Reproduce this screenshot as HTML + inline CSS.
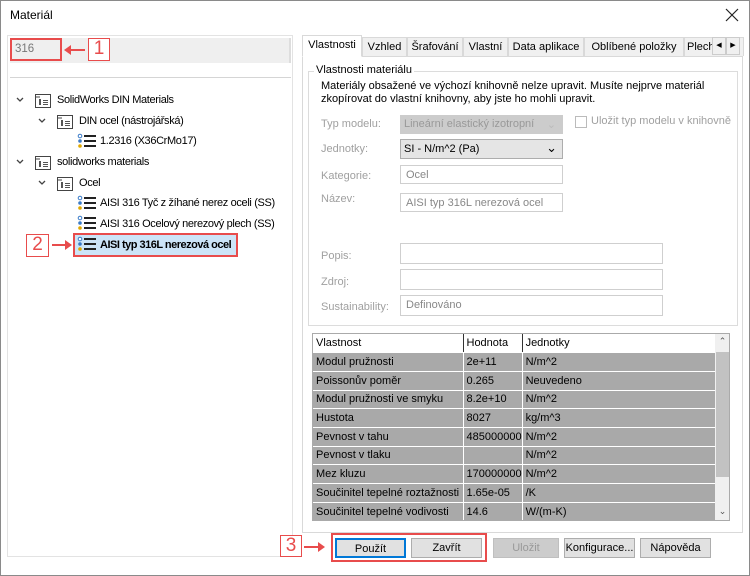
<!DOCTYPE html>
<html><head><meta charset="utf-8"><style>
*{box-sizing:border-box;margin:0;padding:0}
body{width:750px;height:576px;background:#fff;font-family:"Liberation Sans","DejaVu Sans",sans-serif;font-size:11.5px;color:#000;position:relative;overflow:hidden}
.a{position:absolute}
.frame{left:0;top:0;width:750px;height:576px;border:1px solid #8a8a8a}
.redbox{border:2px solid #e84c4c}
.num{border:1px solid #e84c4c;color:#e84c4c;font-size:19px;text-align:center;line-height:20px;background:#fff}
.arrow{height:2px;background:#e84c4c}
.lbl{color:#a0a0a0;font-size:11px}
.inp{border:1px solid #cfcfcf;background:#fff;color:#888;font-size:11px;padding:3px 0 0 5px}
.tab{top:37px;height:19px;border:1px solid #d9d9d9;border-bottom:none;background:#f0f0f0;font-size:11px;padding-top:3px;text-align:center}
.btn{top:538px;height:20px;border:1px solid #adadad;background:#e1e1e1;font-size:11px;text-align:center;line-height:18px}
table{border-collapse:collapse;font-size:11px}
td{height:18.7px;border-right:1px solid #fff;border-bottom:1px solid #fff;padding-left:3px;background:#a9a9a9;white-space:nowrap}
.tr{font-size:11px;letter-spacing:-0.35px}
</style></head><body>
<div class="a frame"></div>
<div class="a" style="left:10px;top:8px;font-size:12px">Materiál</div>
<svg class="a" style="left:725px;top:8px" width="14" height="14"><path d="M1 1L13 13M13 1L1 13" stroke="#222" stroke-width="1.2"/></svg>

<!-- left panel -->
<div class="a" style="left:7px;top:35px;width:286px;height:522px;border:1px solid #e3e3e3"></div>
<div class="a" style="left:10px;top:38px;width:281px;height:25px;background:#efefef;border-right:2px solid #ddd"></div>
<div class="a redbox" style="left:10px;top:38px;width:52px;height:23px"></div>
<div class="a" style="left:15px;top:43px;color:#777;font-size:11.5px">316</div>
<div class="a arrow" style="left:67px;top:49px;width:18px"></div>
<div class="a" style="left:64px;top:45px;width:0;height:0;border:5px solid transparent;border-right:7px solid #e84c4c;border-left:none"></div>
<div class="a num" style="left:88px;top:38px;width:22px;height:23px">1</div>
<div class="a" style="left:10px;top:77px;width:281px;height:1px;background:#d5d5d5"></div>

<svg class="a" style="left:0;top:0" width="300" height="260">
 <g fill="none" stroke="#444" stroke-width="1.3">
  <path d="M17 98l3 3 3-3"/><path d="M39 119l3 3 3-3"/><path d="M17 160l3 3 3-3"/><path d="M39 181l3 3 3-3"/>
 </g>
 <g fill="#fff" stroke="#444">
  <rect x="35.5" y="94.5" width="15" height="13"/><rect x="57.5" y="115.5" width="15" height="13"/>
  <rect x="35.5" y="156.5" width="15" height="13"/><rect x="57.5" y="177.5" width="15" height="13"/>
 </g>
 <g stroke="#444"><path d="M35 97h5M57 118h5M35 159h5M57 180h5"/></g>
 <g stroke="#222" stroke-width="2">
  <path d="M84 136h12M84 141h12M84 146h12"/>
  <path d="M84 198h12M84 203h12M84 208h12"/>
  <path d="M84 218h12M84 223h12M84 228h12"/>
  <path d="M84 239h12M84 244h12M84 249h12"/>
 </g>
 <g fill="#fff" stroke="#3a7bc8"><circle cx="80" cy="136" r="1.8"/><circle cx="80" cy="198" r="1.8"/><circle cx="80" cy="218" r="1.8"/><circle cx="80" cy="239" r="1.8"/></g>
 <g fill="#3a7bc8"><circle cx="80" cy="141" r="1.8"/><circle cx="80" cy="203" r="1.8"/><circle cx="80" cy="223" r="1.8"/><circle cx="80" cy="244" r="1.8"/></g>
 <g fill="#e0a800"><circle cx="80" cy="146" r="1.8"/><circle cx="80" cy="208" r="1.8"/><circle cx="80" cy="228" r="1.8"/><circle cx="80" cy="249" r="1.8"/></g>
 <g fill="#555"><rect x="39" y="99" width="2" height="6"/><rect x="61" y="120" width="2" height="6"/><rect x="39" y="161" width="2" height="6"/><rect x="61" y="182" width="2" height="6"/>
 <path d="M43 100h5v1h-5zM43 102h5v1h-5zM43 104h5v1h-5zM65 121h5v1h-5zM65 123h5v1h-5zM65 125h5v1h-5zM43 162h5v1h-5zM43 164h5v1h-5zM43 166h5v1h-5zM65 183h5v1h-5zM65 185h5v1h-5zM65 187h5v1h-5z"/></g>
</svg>
<div class="a tr" style="left:57px;top:94px">SolidWorks DIN Materials</div>
<div class="a tr" style="left:79px;top:115px">DIN ocel (nástrojářská)</div>
<div class="a tr" style="left:100px;top:135px">1.2316 (X36CrMo17)</div>
<div class="a tr" style="left:57px;top:156px">solidworks materials</div>
<div class="a tr" style="left:79px;top:177px">Ocel</div>
<div class="a tr" style="left:100px;top:197px">AISI 316 Tyč z žíhané nerez oceli (SS)</div>
<div class="a tr" style="left:100px;top:218px">AISI 316 Ocelový nerezový plech (SS)</div>
<div class="a redbox" style="left:73px;top:233px;width:165px;height:24px;background:#cce4f7;z-index:-1"></div>
<div class="a tr" style="left:100px;top:239px;font-weight:bold;letter-spacing:-0.5px">AISI typ 316L nerezová ocel</div>
<div class="a num" style="left:26px;top:234px;width:23px;height:23px">2</div>
<div class="a arrow" style="left:52px;top:244px;width:15px"></div>
<div class="a" style="left:65px;top:240px;width:0;height:0;border:5px solid transparent;border-left:7px solid #e84c4c;border-right:none"></div>

<!-- tabs -->
<div class="a" style="left:302px;top:56px;width:441px;height:477px;border:1px solid #d9d9d9"></div>
<div class="a tab" style="left:302px;top:35px;height:22px;width:60px;background:#fff;border-color:#d9d9d9;border-bottom:1px solid #fff">Vlastnosti</div>
<div class="a tab" style="left:362px;width:45px">Vzhled</div>
<div class="a tab" style="left:407px;width:56px">Šrafování</div>
<div class="a tab" style="left:463px;width:45px">Vlastní</div>
<div class="a tab" style="left:508px;width:76px">Data aplikace</div>
<div class="a tab" style="left:584px;width:100px">Oblíbené položky</div>
<div class="a tab" style="left:684px;width:60px;text-align:left;padding-left:2px">Plech</div>
<div class="a" style="left:712px;top:37px;width:14px;height:18px;border:1px solid #ccc;background:#f0f0f0;font-size:7px;text-align:center;line-height:16px">◀</div>
<div class="a" style="left:726px;top:37px;width:14px;height:18px;border:1px solid #ccc;background:#f0f0f0;font-size:7px;text-align:center;line-height:16px">▶</div>

<!-- group -->
<div class="a" style="left:308px;top:71px;width:430px;height:255px;border:1px solid #dcdcdc"></div>
<div class="a" style="left:314px;top:64px;background:#fff;padding:0 2px;font-size:11px">Vlastnosti materiálu</div>
<div class="a" style="left:321px;top:80px;font-size:11px;line-height:12.5px">Materiály obsažené ve výchozí knihovně nelze upravit. Musíte nejprve materiál<br>zkopírovat do vlastní knihovny, aby jste ho mohli upravit.</div>
<div class="a lbl" style="left:321px;top:118px">Typ modelu:</div>
<div class="a" style="left:400px;top:115px;width:163px;height:19px;background:#ccc;border:1px solid #ccc;color:#999;font-size:11px;padding:2px 0 0 3px">Lineární elastický izotropní<span style="position:absolute;right:6px;color:#bbb">⌄</span></div>
<div class="a" style="left:575px;top:116px;width:12px;height:12px;border:1px solid #bbb"></div>
<div class="a lbl" style="left:591px;top:115px">Uložit typ modelu v knihovně</div>
<div class="a lbl" style="left:321px;top:143px">Jednotky:</div>
<div class="a" style="left:400px;top:139px;width:163px;height:20px;background:#e5e5e5;border:1px solid #adadad;font-size:11px;padding:3px 0 0 3px">SI - N/m^2 (Pa)<span style="position:absolute;right:5px;top:0;font-size:13px">⌄</span></div>
<div class="a lbl" style="left:321px;top:170px">Kategorie:</div>
<div class="a inp" style="left:400px;top:165px;width:163px;height:19px">Ocel</div>
<div class="a lbl" style="left:321px;top:193px">Název:</div>
<div class="a inp" style="left:400px;top:193px;width:163px;height:19px">AISI typ 316L nerezová ocel</div>
<div class="a lbl" style="left:321px;top:250px">Popis:</div>
<div class="a inp" style="left:400px;top:243px;width:263px;height:21px"></div>
<div class="a lbl" style="left:321px;top:276px">Zdroj:</div>
<div class="a inp" style="left:400px;top:269px;width:263px;height:21px"></div>
<div class="a lbl" style="left:321px;top:301px">Sustainability:</div>
<div class="a inp" style="left:400px;top:295px;width:263px;height:21px">Definováno</div>

<!-- table -->
<div class="a" style="left:312px;top:333px;width:418px;height:188px;border:1px solid #aaa;background:#a9a9a9;overflow:hidden">
<table style="width:403px">
<tr><td style="background:#fff;width:150px;border-right:1px solid #333">Vlastnost</td><td style="background:#fff;width:56px;border-right:1px solid #333">Hodnota</td><td style="background:#fff">Jednotky</td></tr>
<tr><td>Modul pružnosti</td><td>2e+11</td><td>N/m^2</td></tr>
<tr><td>Poissonův poměr</td><td>0.265</td><td>Neuvedeno</td></tr>
<tr><td>Modul pružnosti ve smyku</td><td>8.2e+10</td><td>N/m^2</td></tr>
<tr><td>Hustota</td><td>8027</td><td>kg/m^3</td></tr>
<tr><td>Pevnost v tahu</td><td>485000000</td><td>N/m^2</td></tr>
<tr><td>Pevnost v tlaku</td><td></td><td>N/m^2</td></tr>
<tr><td>Mez kluzu</td><td>170000000</td><td>N/m^2</td></tr>
<tr><td>Součinitel tepelné roztažnosti</td><td>1.65e-05</td><td>/K</td></tr>
<tr><td>Součinitel tepelné vodivosti</td><td>14.6</td><td>W/(m-K)</td></tr>
</table>
<div class="a" style="left:402px;top:0;width:15px;height:187px;background:#f0f0f0"></div>
<div class="a" style="left:403px;top:18px;width:13px;height:125px;background:#c2c2c2"></div>
<div class="a" style="left:402px;top:2px;width:15px;font-size:9px;text-align:center;color:#555">⌃</div>
<div class="a" style="left:402px;top:172px;width:15px;font-size:9px;text-align:center;color:#555">⌄</div>
</div>

<!-- buttons -->
<div class="a num" style="left:280px;top:535px;width:22px;height:22px">3</div>
<div class="a arrow" style="left:304px;top:546px;width:16px"></div>
<div class="a" style="left:318px;top:542px;width:0;height:0;border:5px solid transparent;border-left:7px solid #e84c4c;border-right:none"></div>
<div class="a redbox" style="left:331px;top:533px;width:156px;height:29px"></div>
<div class="a btn" style="left:335px;width:71px;border:2px solid #0078d7">Použít</div>
<div class="a btn" style="left:411px;width:71px">Zavřít</div>
<div class="a btn" style="left:493px;width:66px;background:#ccc;border-color:#bfbfbf;color:#999">Uložit</div>
<div class="a btn" style="left:564px;width:71px">Konfigurace...</div>
<div class="a btn" style="left:640px;width:71px">Nápověda</div>
</body></html>
